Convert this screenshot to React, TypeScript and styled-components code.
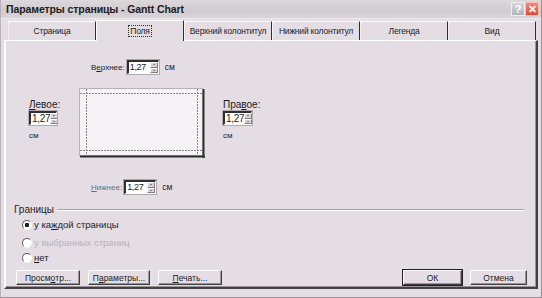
import styled, { createGlobalStyle } from "styled-components";

const Global = createGlobalStyle`
    html, body { margin: 0; padding: 0; background: #e4dde4; }
    * { box-sizing: border-box; }
`;

const Window = styled.div`
    width: 542px;
    height: 298px;
    display: flex;
    flex-direction: column;
    background: #e4dde4;
    border-left: 1px solid #b8b2b8;
    border-right: 1px solid #9a949a;
    border-bottom: 1px solid #9a949a;
    padding-bottom: 8px;
    font-family: "Liberation Sans", Arial, sans-serif;
    font-size: 9px;
    color: #1c1c1c;
    overflow: hidden;
`;

const TitleBar = styled.div`
    height: 19px;
    display: flex;
    align-items: center;
    padding: 0 2px 0 5px;
    background: linear-gradient(#dcd8dc, #cfcbcf 60%, #d8d4d8);
    border-bottom: 1px solid #ece8ec;
`;

const Title = styled.span`
    flex: 1;
    font-weight: bold;
    font-size: 10.5px;
    letter-spacing: -0.1px;
    color: #202020;
`;

const CapButton = styled.div<{ close?: boolean }>`
    width: 14px;
    height: 14px;
    display: flex;
    align-items: center;
    justify-content: center;
    background: ${(p) => (p.close ? "linear-gradient(#f08a7a, #d84a38)" : "linear-gradient(#d6d6dc, #b4b4bc)")};
    border: 1px solid ${(p) => (p.close ? "#f4c0b8" : "#eeeeee")};
    color: #fff;
    font-weight: bold;
    font-size: 11px;
`;

const TabStrip = styled.div`
    height: 21px;
    display: flex;
    align-items: flex-end;
    padding-left: 7px;
`;

const Tab = styled.div<{ active?: boolean }>`
    width: 88px;
    height: ${(p) => (p.active ? "21px" : "19px")};
    display: flex;
    align-items: center;
    justify-content: center;
    white-space: nowrap;
    font-size: 8.5px;
    letter-spacing: -0.2px;
    border-top: 1px solid #ffffff;
    border-left: 1px solid ${(p) => (p.active ? "#ffffff" : "#f4f0f4")};
    border-right: 1px solid #303030;
    background: #e4dde4;
    position: relative;
    top: ${(p) => (p.active ? "1px" : "0")};
    z-index: ${(p) => (p.active ? 1 : 0)};
    span {
        padding: 0 1px;
        outline: ${(p) => (p.active ? "1px dotted #303030" : "none")};
    }
`;

const Panel = styled.div`
    flex: 1;
    margin: 0 3px;
    border-top: 1px solid #ffffff;
    border-left: 2px solid #ffffff;
    border-right: 2px solid #404040;
    border-bottom: 2px solid #404040;
    box-shadow: inset -1px -1px 0 #9a949a;
    display: flex;
    flex-direction: column;
`;

const MarginsGrid = styled.div`
    display: grid;
    grid-template-columns: 50px 126px auto;
    padding: 19px 0 0 23px;
`;

const FieldRow = styled.div`
    grid-column: 2 / 4;
    display: flex;
    align-items: center;
    gap: 2px;
    margin-left: 12px;
    height: 14px;
`;

const SideCell = styled.div<{ col: number }>`
    grid-row: 2;
    grid-column: ${(p) => p.col};
    margin-left: ${(p) => (p.col === 3 ? 18 : 0)}px;
    display: flex;
    flex-direction: column;
    align-items: flex-start;
    padding-top: 25px;
    gap: 1px;
    font-size: 10px;
`;

const SmallLabel = styled.span<{ faded?: boolean }>`
    font-size: 8px;
    color: ${(p) => (p.faded ? "#707070" : "#1c1c1c")};
`;

const Spin = styled.div<{ w: number; big?: boolean }>`
    width: ${(p) => p.w}px;
    height: 14px;
    display: flex;
    background: #fff;
    border-top: 2px solid #303030;
    border-left: 2px solid #303030;
    border-right: 1px solid #ffffff;
    border-bottom: 1px solid #ffffff;
    outline: 1px solid #b0aab0;
    font-size: ${(p) => (p.big ? "10px" : "9px")};
    letter-spacing: -0.3px;
    line-height: 11px;
    white-space: nowrap;
    span { flex: 1; padding-left: 1px; }
`;

const SpinArrows = styled.div`
    width: 8px;
    flex: none;
    display: flex;
    flex-direction: column;
`;

const Arrow = styled.i<{ down?: boolean }>`
    flex: 1;
    min-height: 0;
    background: #d8d2d8;
    border-top: 1px solid #fff;
    border-left: 1px solid #fff;
    border-right: 1px solid #808080;
    border-bottom: 1px solid #808080;
    display: flex;
    align-items: center;
    justify-content: center;
    &::after {
        content: "";
        border-left: 1.5px solid transparent;
        border-right: 1.5px solid transparent;
        ${(p) => (p.down ? "border-top: 1.5px solid #303030;" : "border-bottom: 1.5px solid #303030;")}
    }
`;

const PageCell = styled.div`
    grid-row: 2;
    grid-column: 2;
    margin: 14px 0 22px;
    height: 70px;
`;

const Cm = styled.span`
    font-size: 8.5px;
    margin-left: 4px;
`;

const GroupHead = styled.div`
    display: flex;
    align-items: center;
    margin: 10px 12px 0 8px;
    font-size: 10px;
    &::after {
        content: "";
        flex: 1;
        margin-left: 3px;
        border-top: 1px solid #a8a2a8;
        border-bottom: 1px solid #ffffff;
    }
`;

const RadioList = styled.div`
    display: flex;
    flex-direction: column;
    padding-left: 16px;
    margin-top: 4px;
    gap: 4px;
`;

const RadioRow = styled.label<{ disabled?: boolean }>`
    display: flex;
    align-items: center;
    height: 11px;
    font-size: 9.5px;
    color: ${(p) => (p.disabled ? "#b8b2b8" : "#1c1c1c")};
`;

const RadioDot = styled.span<{ on?: boolean }>`
    width: 10px;
    height: 10px;
    border-radius: 50%;
    background: ${(p) => (p.on ? "radial-gradient(circle, #202020 0 2px, #fff 2.5px)" : "#fff")};
    border: 1px solid;
    border-color: #606060 #f8f8f8 #f8f8f8 #606060;
    margin-right: 2px;
`;

const ButtonRow = styled.div`
    display: flex;
    align-items: center;
    margin-top: auto;
    padding: 0 9px 2px 10px;
    gap: 8px;
`;

const Spacer = styled.div`
    flex: 1;
`;

const Btn = styled.div<{ w: number; primary?: boolean }>`
    width: ${(p) => p.w}px;
    height: 15px;
    display: flex;
    align-items: center;
    justify-content: center;
    font-size: 8.5px;
    background: #e4dde4;
    border-top: 1px solid #ffffff;
    border-left: 1px solid #ffffff;
    border-right: 1px solid #404040;
    border-bottom: 1px solid #404040;
    box-shadow: inset -1px -1px 0 #9a949a${(p) => (p.primary ? ", 0 0 0 1px #202020" : "")};
`;

function Spinner(props: { w: number; big?: boolean }) {
    return (
        <Spin w={props.w} big={props.big}>
            <span>1,27</span>
            <SpinArrows>
                <Arrow />
                <Arrow down />
            </SpinArrows>
        </Spin>
    );
}

function PagePicture() {
    return (
        <svg width="126" height="70" viewBox="0 0 126 70">
            <rect x="0.5" y="0.5" width="123" height="67" fill="#f6f3f6" stroke="#b8b2b8" />
            <line x1="124.5" y1="1" x2="124.5" y2="70" stroke="#303030" strokeWidth="2" />
            <line x1="1" y1="68.5" x2="126" y2="68.5" stroke="#303030" strokeWidth="2" />
            <g stroke="#8a848a" strokeDasharray="2 1" strokeWidth="1">
                <line x1="7.5" y1="1" x2="7.5" y2="67" />
                <line x1="118.5" y1="1" x2="118.5" y2="67" />
                <line x1="1" y1="5.5" x2="123" y2="5.5" />
                <line x1="1" y1="62.5" x2="123" y2="62.5" />
            </g>
        </svg>
    );
}

const tabs = ["Страница", "Поля", "Верхний колонтитул", "Нижний колонтитул", "Легенда", "Вид"];

export default function App() {
    return (
        <>
            <Global />
            <Window>
                <TitleBar>
                    <Title>Параметры страницы - Gantt Chart</Title>
                    <CapButton>?</CapButton>
                    <CapButton close>✕</CapButton>
                </TitleBar>
                <TabStrip>
                    {tabs.map((t) => (
                        <Tab key={t} active={t === "Поля"}>
                            <span>{t}</span>
                        </Tab>
                    ))}
                </TabStrip>
                <Panel>
                    <MarginsGrid>
                        <FieldRow style={{ gridRow: 1 }}>
                            <SmallLabel>В<u>е</u>рхнее:</SmallLabel>
                            <Spinner w={32} />
                            <Cm>см</Cm>
                        </FieldRow>
                        <SideCell col={1}>
                            <span><u>Л</u>евое:</span>
                            <Spinner w={28} big />
                            <SmallLabel style={{ marginTop: 5 }}>см</SmallLabel>
                        </SideCell>
                        <PageCell>
                            <PagePicture />
                        </PageCell>
                        <SideCell col={3}>
                            <span>Пра<u>в</u>ое:</span>
                            <Spinner w={29} big />
                            <SmallLabel style={{ marginTop: 5 }}>см</SmallLabel>
                        </SideCell>
                        <FieldRow style={{ gridRow: 3 }}>
                            <SmallLabel faded><u>Н</u>ижнее:</SmallLabel>
                            <Spinner w={32} />
                            <Cm>см</Cm>
                        </FieldRow>
                    </MarginsGrid>
                    <GroupHead>Границы</GroupHead>
                    <RadioList>
                        <RadioRow>
                            <RadioDot on />у ка<u>ж</u>дой страницы
                        </RadioRow>
                        <RadioRow disabled style={{ marginTop: 3 }}>
                            <RadioDot />у выбранных страниц
                        </RadioRow>
                        <RadioRow>
                            <RadioDot /><u>н</u>ет
                        </RadioRow>
                    </RadioList>
                    <ButtonRow>
                        <Btn w={64}>Просм<u>о</u>тр...</Btn>
                        <Btn w={62}>П<u>а</u>раметры...</Btn>
                        <Btn w={64}><u>П</u>ечать...</Btn>
                        <Spacer />
                        <Btn w={59} primary>ОК</Btn>
                        <Btn w={57}>Отмена</Btn>
                    </ButtonRow>
                </Panel>
            </Window>
        </>
    );
}
